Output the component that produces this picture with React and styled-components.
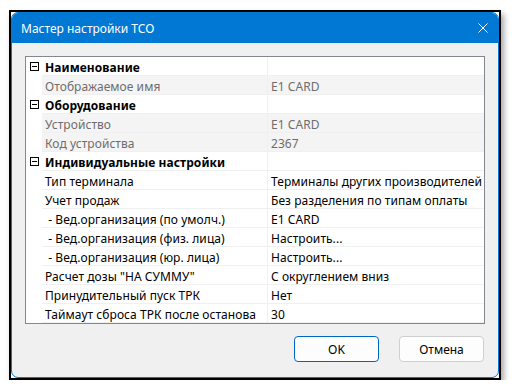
import React from "react";
import styled, { createGlobalStyle } from "styled-components";

const GlobalStyle = createGlobalStyle`
  body {
    margin: 0;
    background: #ffffff;
    font-family: "Noto Sans", "Liberation Sans", sans-serif;
  }
`;

const Frame = styled.div`
  box-sizing: border-box;
  width: 492px;
  height: 370px;
  margin: 10px 0 0 9px;
  border: 2px solid #000;
  background: #fff;
  box-shadow: 3px 4px 6px rgba(0, 0, 0, 0.35);
`;

const Window = styled.div`
  box-sizing: border-box;
  height: 100%;
  display: flex;
  flex-direction: column;
  border: 1px solid #0078d4;
  border-radius: 7px;
  overflow: hidden;
  background: #f0f0f0;
`;

const TitleBar = styled.div`
  height: 30px;
  flex-shrink: 0;
  display: flex;
  align-items: center;
  justify-content: space-between;
  padding: 0 10px 0 9px;
  background: #0078d4;
  color: #fff;
  font-family: "Noto Sans", "Liberation Sans", sans-serif;
  font-size: 12px;
`;

const CloseIcon = () => (
  <svg width="10" height="10" viewBox="0 0 10 10">
    <path d="M0.5 0.5 L9.5 9.5 M9.5 0.5 L0.5 9.5" stroke="#fff" strokeWidth="1" />
  </svg>
);

const Body = styled.div`
  flex: 1;
  display: flex;
  flex-direction: column;
  padding: 13px 14px 0 13px;
`;

const Grid = styled.div`
  box-sizing: border-box;
  width: 460px;
  border: 1px solid #828790;
  background: #fff;
  font-size: 12px;
  letter-spacing: 0.06px;
`;

const Row = styled.div`
  display: grid;
  grid-template-columns: 16px 226px 1fr;
  height: 19px;
`;

const Gutter = styled.div`
  display: flex;
  align-items: center;
  justify-content: center;
  padding-left: 1px;
  background: #fff;
`;

const Cell = styled.div`
  box-sizing: border-box;
  display: flex;
  align-items: center;
  padding: 2px 0 0 3px;
  border-bottom: 1px solid #f0f0f0;
  border-right: ${(p) => (p.$value ? "none" : "1px solid #f0f0f0")};
  background: ${(p) => (p.$disabled ? "#f4f4f4" : "#fff")};
  color: ${(p) => (p.$disabled ? "#6d6d6d" : "#000")};
  font-weight: ${(p) => (p.$bold ? 700 : 400)};
  white-space: pre;
  overflow: hidden;
`;

const Minus = styled.div`
  box-sizing: border-box;
  width: 9px;
  height: 9px;
  border: 1px solid #000;
  position: relative;
  &::after {
    content: "";
    position: absolute;
    left: 1px;
    right: 1px;
    top: 3px;
    height: 1px;
    background: #000;
  }
`;

const Footer = styled.div`
  display: flex;
  justify-content: flex-end;
  gap: 20px;
  padding-top: 12px;
`;

const Button = styled.button`
  box-sizing: border-box;
  width: 85px;
  height: 26px;
  border-radius: 4px;
  border: 1px solid ${(p) => (p.$primary ? "#0067c0" : "#d0d0d0")};
  background: #fdfdfd;
  color: #000;
  font-family: "Noto Sans", "Liberation Sans", sans-serif;
  font-size: 12px;
  padding: 0;
`;

const rows = [
  { header: "Наименование" },
  { name: "Отображаемое имя", value: "E1 CARD", disabled: true },
  { header: "Оборудование" },
  { name: "Устройство", value: "E1 CARD", disabled: true },
  { name: "Код устройства", value: "2367", disabled: true },
  { header: "Индивидуальные настройки" },
  { name: "Тип терминала", value: "Терминалы других производителей" },
  { name: "Учет продаж", value: "Без разделения по типам оплаты" },
  { name: " - Вед.организация (по умолч.)", value: "E1 CARD" },
  { name: " - Вед.организация (физ. лица)", value: "Настроить..." },
  { name: " - Вед.организация (юр. лица)", value: "Настроить..." },
  { name: 'Расчет дозы "НА СУММУ"', value: "С округлением вниз" },
  { name: "Принудительный пуск ТРК", value: "Нет" },
  { name: "Таймаут сброса ТРК после останова", value: "30" },
];

export default function App() {
  return (
    <>
      <GlobalStyle />
      <Frame>
        <Window>
          <TitleBar>
            <span>Мастер настройки ТСО</span>
            <CloseIcon />
          </TitleBar>
          <Body>
            <Grid>
              {rows.map((r, i) =>
                r.header ? (
                  <Row key={i}>
                    <Gutter>
                      <Minus />
                    </Gutter>
                    <Cell $bold>{r.header}</Cell>
                    <Cell $value />
                  </Row>
                ) : (
                  <Row key={i}>
                    <Gutter />
                    <Cell $disabled={r.disabled}>{r.name}</Cell>
                    <Cell $value $disabled={r.disabled}>
                      {r.value}
                    </Cell>
                  </Row>
                )
              )}
            </Grid>
            <Footer>
              <Button $primary>OK</Button>
              <Button>Отмена</Button>
            </Footer>
          </Body>
        </Window>
      </Frame>
    </>
  );
}
